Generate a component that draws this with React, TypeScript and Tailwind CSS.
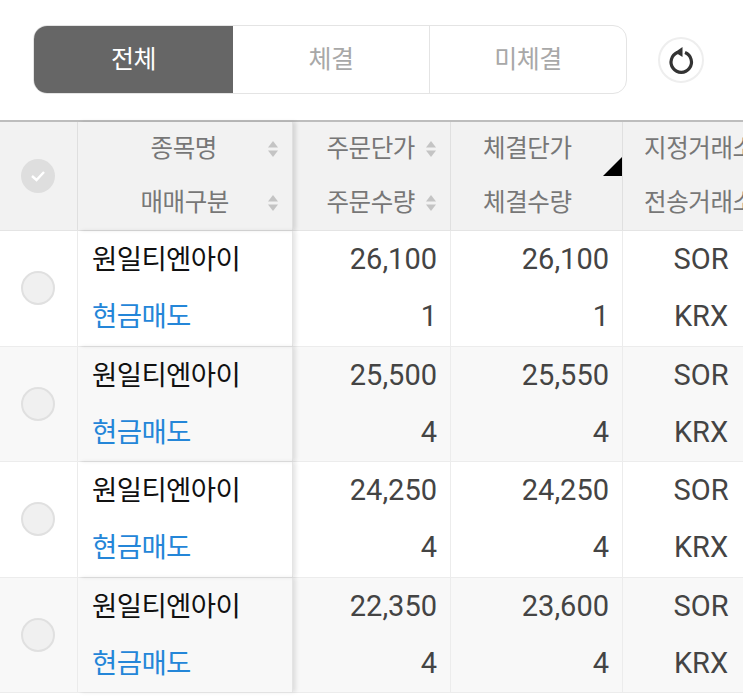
import React from 'react';

const font = 'font-["Roboto","Noto_Sans_CJK_KR",sans-serif]';

const rows = [
  { price: '26,100', qty: '1', execPrice: '26,100', execQty: '1' },
  { price: '25,500', qty: '4', execPrice: '25,550', execQty: '4' },
  { price: '24,250', qty: '4', execPrice: '24,250', execQty: '4' },
  { price: '22,350', qty: '4', execPrice: '23,600', execQty: '4' },
];

function SortIcon() {
  return (
    <svg width="12" height="18" viewBox="0 0 12 18" className="shrink-0">
      <path d="M6 1 L11 7.5 H1 Z" fill="#c4c4c4" />
      <path d="M6 17 L11 10.5 H1 Z" fill="#c4c4c4" />
    </svg>
  );
}

function Radio() {
  return <div className="w-[34px] h-[34px] rounded-full bg-[#f0f0f0] border-2 border-[#e0e0e0]" />;
}

function RefreshIcon() {
  return (
    <svg width="28" height="32" viewBox="0 0 28 32" fill="none">
      <path d="M10.5 8.6 A10.2 10.2 0 1 0 18 8.6" stroke="#333" strokeWidth="3.2" strokeLinecap="butt" />
      <path d="M8 8.2 L15.5 3 L15.5 13 Z" fill="#333" />
    </svg>
  );
}

function Row({ row, odd }: { row: (typeof rows)[number]; odd: boolean }) {
  return (
    <div className={`flex h-[115.5px] border-b border-[#ececec] ${odd ? 'bg-[#f8f8f8]' : 'bg-white'}`}>
      <div className="w-[78px] shrink-0 flex items-center justify-center border-r border-[#ececec] pr-[2px]">
        <Radio />
      </div>
      <div className="w-[215px] shrink-0 flex flex-col justify-center gap-[16px] pl-[14px] shadow-[3px_0_4px_rgba(0,0,0,0.1)] z-10 border-r border-[#e4e4e4]">
        <div className="h-[41px] leading-[41px] text-[27.5px] tracking-[-0.6px] text-[#111] whitespace-nowrap">원일티엔아이</div>
        <div className="h-[41px] leading-[41px] text-[27.5px] tracking-[-0.6px] text-[#2486d8] whitespace-nowrap">현금매도</div>
      </div>
      <div className="w-[158px] shrink-0 flex flex-col justify-center gap-[16px] items-end pr-[13px] border-r border-[#ececec] text-[#444] text-[29px]">
        <div className="h-[41px] leading-[41px]">{row.price}</div>
        <div className="h-[41px] leading-[41px]">{row.qty}</div>
      </div>
      <div className="w-[172px] shrink-0 flex flex-col justify-center gap-[16px] items-end pr-[13px] border-r border-[#ececec] text-[#444] text-[29px]">
        <div className="h-[41px] leading-[41px]">{row.execPrice}</div>
        <div className="h-[41px] leading-[41px]">{row.execQty}</div>
      </div>
      <div className="w-[156px] shrink-0 flex flex-col justify-center gap-[16px] items-center text-[#444] text-[29px]">
        <div className="h-[41px] leading-[41px]">SOR</div>
        <div className="h-[41px] leading-[41px]">KRX</div>
      </div>
    </div>
  );
}

export default function App() {
  return (
    <div className={`${font} w-[743px] h-[697px] bg-white overflow-hidden`}>
      {/* Filter tabs */}
      <div className="flex items-center h-[120px] pl-[33px] pb-[1px]">
        <div className="flex w-[594px] h-[69px] rounded-[14px] border border-[#e4e4e4] overflow-hidden text-[25px] tracking-[-0.5px]">
          <div className="w-[199px] bg-[#666666] text-white flex items-center justify-center">전체</div>
          <div className="w-[197px] text-[#a8a8a8] flex items-center justify-center border-r border-[#e4e4e4]">체결</div>
          <div className="flex-1 text-[#a8a8a8] flex items-center justify-center">미체결</div>
        </div>
        <div className="ml-[31px] w-[46px] h-[46px] rounded-full border-2 border-[#eeeeee] flex items-center justify-center">
          <RefreshIcon />
        </div>
      </div>

      {/* Table */}
      <div className="border-t-2 border-[#bdbdbd] w-[779px]">
        <div className="flex h-[109px] bg-[#f2f2f2] border-b border-[#e4e4e4] text-[24.5px] tracking-[-0.4px] text-[#777]">
          <div className="w-[78px] shrink-0 flex items-center justify-center border-r border-[#e0e0e0] pr-[2px]">
            <div className="w-[34px] h-[34px] rounded-full bg-[#dedede] flex items-center justify-center">
              <svg width="18" height="14" viewBox="0 0 18 14" fill="none">
                <path d="M3 7 L7.5 11 L15 3" stroke="#fff" strokeWidth="2.4" />
              </svg>
            </div>
          </div>
          <div className="w-[215px] shrink-0 flex flex-col justify-center gap-[14px] pr-[13px] shadow-[3px_0_4px_rgba(0,0,0,0.12)] z-10 border-r border-[#e0e0e0]">
            <div className="h-[40px] flex items-center justify-end gap-[50px]">종목명 <SortIcon /></div>
            <div className="h-[40px] flex items-center justify-end gap-[38px]">매매구분 <SortIcon /></div>
          </div>
          <div className="w-[158px] shrink-0 flex flex-col justify-center gap-[14px] pr-[13px] border-r border-[#e0e0e0]">
            <div className="h-[40px] flex items-center justify-end gap-[10px]">주문단가 <SortIcon /></div>
            <div className="h-[40px] flex items-center justify-end gap-[10px]">주문수량 <SortIcon /></div>
          </div>
          <div className="relative w-[172px] shrink-0 flex flex-col justify-center gap-[14px] pl-[32px] border-r border-[#e0e0e0]">
            <div className="h-[40px] leading-[40px]">체결단가</div>
            <div className="h-[40px] leading-[40px]">체결수량</div>
            <div className="absolute right-0 top-[35px] w-0 h-0 border-l-[19px] border-l-transparent border-b-[19px] border-b-black" />
          </div>
          <div className="w-[156px] shrink-0 flex flex-col justify-center gap-[14px] pl-[21px] whitespace-nowrap">
            <div className="h-[40px] leading-[40px]">지정거래소</div>
            <div className="h-[40px] leading-[40px]">전송거래소</div>
          </div>
        </div>
        {rows.map((row, i) => (
          <Row key={i} row={row} odd={i % 2 === 1} />
        ))}
      </div>
    </div>
  );
}
